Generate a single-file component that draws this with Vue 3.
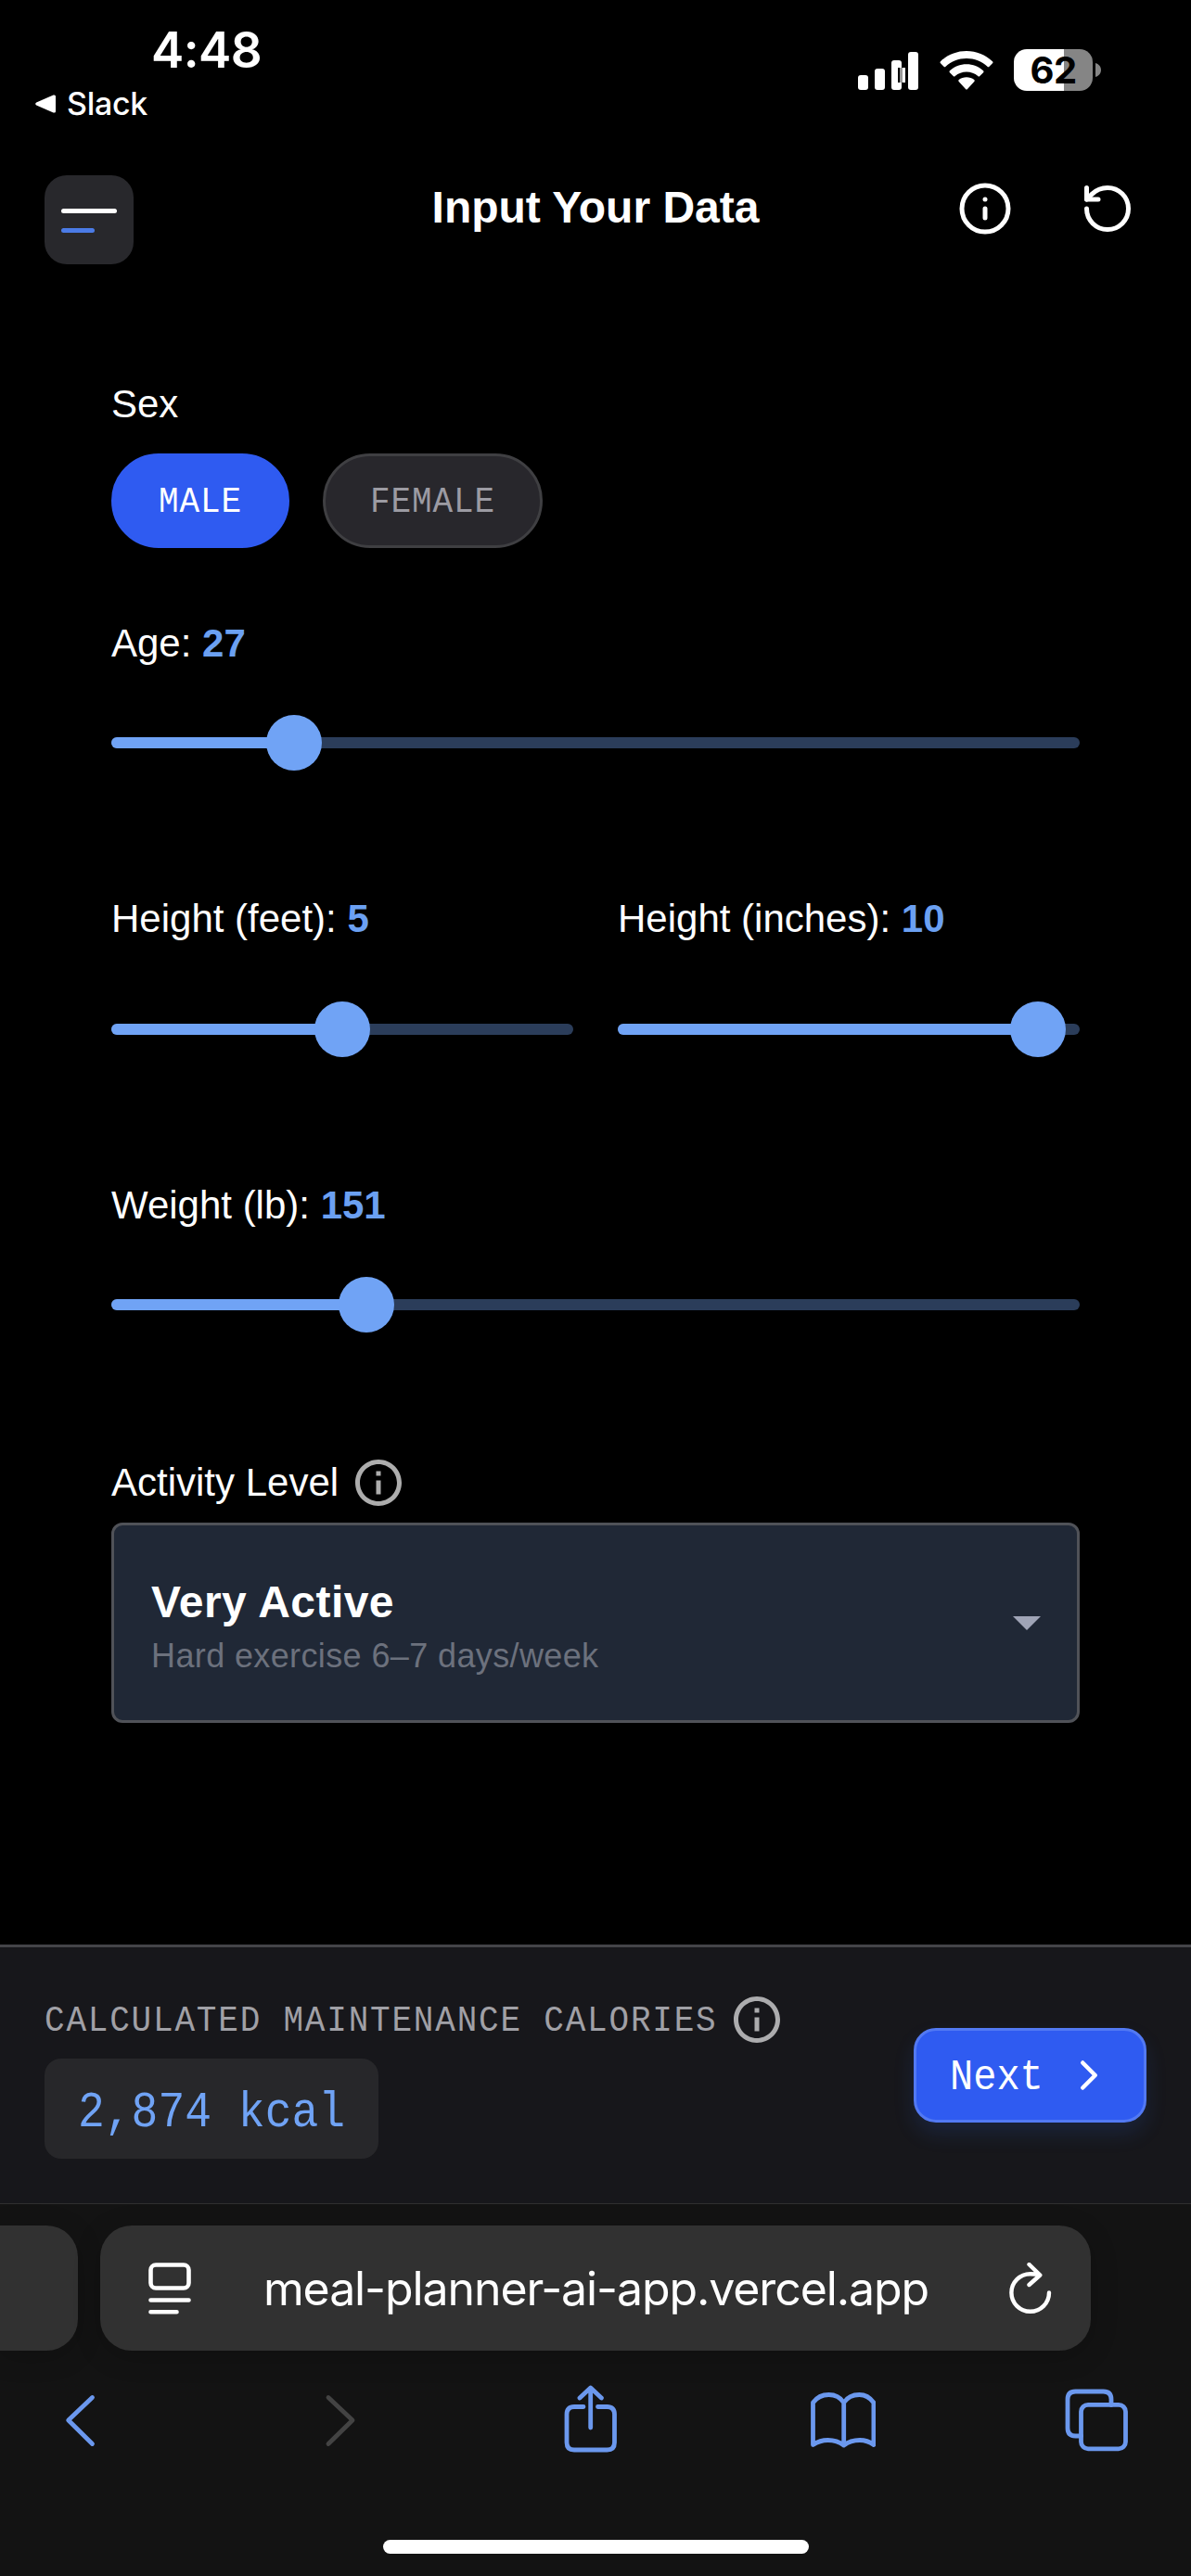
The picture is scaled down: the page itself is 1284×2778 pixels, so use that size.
<script setup>
import { ref, computed } from 'vue'

const sex = ref('Male')
const sexes = ['Male', 'Female']
const age = { label: 'Age', value: 27, percent: 18.9 }
const feet = { label: 'Height (feet)', value: 5, percent: 50 }
const inches = { label: 'Height (inches)', value: 10, percent: 90.9 }
const weight = { label: 'Weight (lb)', value: 151, percent: 26.3 }
const rows = [
  { name: 'age', fields: [age] },
  { name: 'height', fields: [feet, inches] },
  { name: 'weight', fields: [weight] },
]
const calories = ref(2874)
const caloriesText = computed(() => `${calories.value.toLocaleString('en-US')} kcal`)
</script>

<template>
  <div class="screen">
    <div class="status">
      <div class="status-left">
        <div class="time">4:48</div>
        <div class="back-app">
          <svg width="22" height="20" viewBox="0 0 22 20"><path d="M1.200 8.600 19.500.6Q22-.2 22 2v16q0 2.200-2.500 1.400L1.200 11.400Q-.8 10 1.200 8.600Z" fill="#fff" /></svg>
          <span>Slack</span>
        </div>
      </div>
      <div class="status-right">
        <svg class="signal" width="66" height="42" viewBox="0 0 66 42">
          <g fill="#fff">
            <rect x="0" y="26" width="11" height="16" rx="3" />
            <rect x="18" y="19" width="11" height="23" rx="3" />
            <rect x="36" y="10" width="11" height="32" rx="3" />
            <rect x="54" y="1" width="11" height="41" rx="3" />
          </g>
          <path d="M43 18h4v16h-4z" fill="#000" />
          <path d="M45 18h3v16h-3z" fill="#999" />
          <path d="M48 18h3v16h-3z" fill="#fff" />
        </svg>
        <svg class="wifi" width="58" height="42" viewBox="0 0 58 42" fill="#fff">
          <path d="M1 11.200C8.500 4 18.300 0 29 0s20.500 4 28 11.200q1 1 0 2L53.500 16.700q-1 1-2 0C45.500 11 37.500 8 29 8S12.500 11 6.500 16.700q-1 1-2 0L1 13.200q-1-1 0-2Z" />
          <path d="M10.900 21.200C15.800 16.700 22.200 14.200 29 14.200s13.200 2.500 18.100 7q1 1 0 2L43.300 27q-1 1-2 0C37.900 24 33.600 22.400 29 22.400S20.100 24 16.700 27q-1 1-2 0l-3.800-3.800q-1-1 0-2Z" />
          <path d="M20.700 31.100C23 29.300 25.900 28.300 29 28.300s6 1 8.300 2.800q1 1 0 2L30 41q-1 1-2 0l-7.300-7.900q-1-1 0-2Z" />
        </svg>
        <div class="battery"><span>62</span></div>
        <svg class="nub" width="6" height="15" viewBox="0 0 6 15"><path d="M0 0c3.500 1 6 4 6 7.500S3.500 14 0 15Z" fill="#858585" /></svg>
      </div>
    </div>

    <header class="header">
      <button class="menu" aria-label="Menu"><i class="bar"></i><i class="bar short"></i></button>
      <h1>Input Your Data</h1>
      <div class="actions">
        <svg width="60" height="60" viewBox="0 0 24 24" class="line"><circle cx="12" cy="12" r="10" /><path d="M12 16v-4M12 8h.01" /></svg>
        <svg width="60" height="60" viewBox="0 0 24 24" class="line"><path d="M3 12a9 9 0 1 0 9-9 9.750 9.750 0 0 0-6.740 2.740L3 8" /><path d="M3 3v5h5" /></svg>
      </div>
    </header>

    <main class="form">
      <div class="label">Sex</div>
      <div class="pills">
        <button v-for="s in sexes" :key="s" class="pill" :class="{ active: sex === s }" @click="sex = s"><span class="mono">{{ s }}</span></button>
      </div>

      <div v-for="row in rows" :key="row.name" class="row" :class="row.name">
        <div v-for="f in row.fields" :key="f.label" class="field">
          <div class="label">{{ f.label }}: <b>{{ f.value }}</b></div>
          <div class="slider">
            <div class="fill" :style="{ width: f.percent + '%' }"></div>
            <div class="thumb" :style="{ left: f.percent + '%' }"></div>
          </div>
        </div>
      </div>

      <div class="label activity">
        <span>Activity Level</span>
        <svg width="60" height="60" viewBox="0 0 24 24" fill="#adadad"><path d="M11 7h2v2h-2zm0 4h2v6h-2zm1-9C6.480 2 2 6.480 2 12s4.480 10 10 10 10-4.480 10-10S17.520 2 12 2m0 18c-4.410 0-8-3.590-8-8s3.590-8 8-8 8 3.590 8 8-3.590 8-8 8" /></svg>
      </div>
      <div class="select">
        <div class="option">
          <div class="option-title">Very Active</div>
          <div class="option-sub">Hard exercise 6–7 days/week</div>
        </div>
        <svg width="30" height="15" viewBox="0 0 30 15"><path d="M0 0h30L15 15Z" fill="#9fa4b6" /></svg>
      </div>
    </main>

    <footer class="summary">
      <div class="totals">
        <div class="caption">
          <span class="mono">Calculated Maintenance Calories</span>
          <svg width="60" height="60" viewBox="0 0 24 24" fill="#acacae"><path d="M11 7h2v2h-2zm0 4h2v6h-2zm1-9C6.480 2 2 6.480 2 12s4.480 10 10 10 10-4.480 10-10S17.520 2 12 2m0 18c-4.410 0-8-3.590-8-8s3.590-8 8-8 8 3.590 8 8-3.590 8-8 8" /></svg>
        </div>
        <div class="kcal"><span class="mono large">{{ caloriesText }}</span></div>
      </div>
      <button class="next">
        <span class="mono large">Next</span>
        <svg width="54" height="54" viewBox="0 0 24 24" class="line"><path d="m9 18 6-6-6-6" /></svg>
      </button>
    </footer>

    <div class="browser">
      <div class="tabs">
        <div class="tab previous"></div>
        <div class="tab current">
          <svg width="46" height="56" viewBox="0 0 46 56" fill="none" stroke="#fff" stroke-width="4.600" stroke-linecap="round">
            <rect x="2.500" y="2.500" width="41" height="25" rx="5.500" />
            <path d="M2.500 40.500h41M2.500 53.300h28" />
          </svg>
          <span class="address">meal-planner-ai-app.vercel.app</span>
          <svg width="48" height="56" viewBox="0 0 48 56" fill="none" stroke="#fff" stroke-width="4.400" stroke-linecap="round" stroke-linejoin="round">
            <path d="M44 32.500a20.300 20.300 0 1 1-20.300-20.300c3.500 0 6.500.2 9.800 1.200M22.500 2l11.800 11.500L22.500 24" />
          </svg>
        </div>
      </div>
      <div class="toolbar">
        <svg viewBox="0 0 72 74"><path d="M48.500 13.500 22.700 38l25.800 25.500" /></svg>
        <svg viewBox="0 0 72 74" class="disabled"><path d="M30 13.500 56 38l-26 25.500" /></svg>
        <svg viewBox="0 0 72 74">
          <path d="M31 23.500h-10q-8 0-8 8v30.500q0 8 8 8h35.500q8 0 8-8v-30.500q0-8-8-8h-10M38.700 46V3.500M27 14 38.700 3 50.400 14" />
        </svg>
        <svg viewBox="0 0 72 74">
          <path d="M37.700 19C33.500 12.700 28 10.500 21.500 10.500S8.500 13.500 4.500 19v45.500C9 61.500 14 59.500 20.500 59.500s12.700 2 17.200 5.500c4.500-3.500 10.700-5.500 17.200-5.500s11 2 15 5V19c-4-5.500-9-8.500-15.500-8.500S41.900 12.700 37.700 19ZM37.700 19v46" />
        </svg>
        <svg viewBox="0 0 72 74">
          <rect x="19.500" y="21.300" width="48" height="47.500" rx="7.500" />
          <path d="M19.500 55h-6q-8.500 0-8.500-8.500V15.500Q5 7 13.500 7h30Q52 7 52 15.500v6" />
        </svg>
      </div>
      <div class="home"></div>
    </div>
  </div>
</template>

<style>
body {
  background: #000;
}
</style>

<style scoped>
.screen {
  box-sizing: border-box;
  display: flex;
  flex-direction: column;
  width: 1284px;
  height: 2778px;
  overflow: hidden;
  background: #000;
  color: #fff;
  font-family: 'Liberation Sans', Arial, sans-serif;
}
button {
  margin: 0;
  color: inherit;
  box-sizing: border-box;
}
svg {
  flex: none;
  display: block;
}
.line {
  fill: none;
  stroke: #fff;
  stroke-width: 2;
  stroke-linecap: round;
  stroke-linejoin: round;
}
/* slightly condensed, taller monospace */
.mono {
  display: inline-block;
  line-height: 1.133;
  transform: translateY(0.075em) scaleY(1.1);
  transform-origin: 0 73.5%;
}
.mono.large {
  transform: translateY(0.115em) scaleY(1.1);
}

.status {
  height: 189px;
  box-sizing: border-box;
  display: flex;
  justify-content: space-between;
  padding: 22px 97px 0 38px;
  font-family: Inter, sans-serif;
}
.time {
  padding-left: 125px;
  height: 64px;
  line-height: 64px;
  font-size: 53px;
  font-weight: 600;
  letter-spacing: -0.6px;
}
.back-app {
  display: flex;
  align-items: center;
  gap: 12px;
  margin-top: 5px;
  height: 41px;
  line-height: 41px;
  font-size: 34px;
  font-weight: 500;
  letter-spacing: -0.3px;
}
.status-right {
  display: flex;
  align-items: center;
  height: 45px;
  margin-top: 31px;
}
.wifi {
  margin-left: 22px;
}
.battery {
  width: 85px;
  height: 45px;
  margin-left: 22px;
  border-radius: 14px;
  background: linear-gradient(90deg, #fff 54px, #858585 54px);
  color: #000;
  font-size: 40px;
  font-weight: 650;
  line-height: 45px;
  text-align: center;
  letter-spacing: -0.5px;
}
.nub {
  margin-left: 3px;
}

.header {
  display: grid;
  grid-template-columns: 300px 1fr 300px;
  height: 96px;
  padding: 0 48px;
}
.menu {
  display: flex;
  flex-direction: column;
  align-items: flex-start;
  gap: 16px;
  width: 96px;
  height: 96px;
  padding: 36px 0 0 18px;
  border: 0;
  border-radius: 24px;
  background: #28282c;
}
.bar {
  width: 60px;
  height: 5px;
  border-radius: 3px;
  background: #fff;
}
.bar.short {
  width: 36px;
  background: #4b7be6;
}
h1 {
  margin: -1px 0 0;
  font-size: 48px;
  line-height: 72px;
  font-weight: 700;
  text-align: center;
}
.actions {
  display: flex;
  justify-content: flex-end;
  gap: 72px;
  padding: 6px 12px 0 0;
}

.form {
  flex: 1;
  padding: 119px 120px 0;
}
.label {
  height: 63px;
  line-height: 63px;
  font-size: 42px;
  white-space: pre;
}
.label b {
  color: #6ba0f2;
}
.pills {
  display: flex;
  gap: 36px;
  margin-top: 22px;
}
.pill {
  height: 102px;
  padding: 0 48px;
  border: 3px solid #3f3f42;
  border-radius: 51px;
  background: #28272c;
  color: #9c9ba3;
  font-family: 'Liberation Mono', monospace;
  font-size: 36px;
  letter-spacing: 0.9px;
  text-transform: uppercase;
}
.pill.active {
  background: #2f5bf1;
  border-color: #2f5bf1;
  color: #fff;
}
.row {
  display: flex;
  gap: 48px;
}
.field {
  flex: 1;
}
.age {
  margin-top: 71px;
}
.height {
  margin-top: 152px;
}
.weight {
  margin-top: 152px;
}
.slider {
  position: relative;
  height: 12px;
  margin-top: 70px;
  border-radius: 6px;
  background: #2b3d5a;
}
.height .slider {
  margin-top: 82px;
}
.fill {
  height: 12px;
  border-radius: 6px;
  background: #70a3f5;
}
.thumb {
  position: absolute;
  top: -24px;
  width: 60px;
  height: 60px;
  margin-left: -30px;
  border-radius: 50%;
  background: #70a3f5;
}
.activity {
  display: flex;
  align-items: center;
  gap: 13px;
  margin-top: 154px;
}
.select {
  box-sizing: border-box;
  display: flex;
  align-items: center;
  justify-content: space-between;
  height: 216px;
  margin-top: 12px;
  padding: 0 39px 0 40px;
  border: 3px solid #505258;
  border-radius: 12px;
  background: #202836;
}
.option {
  padding-top: 7px;
}
.option-title {
  height: 65px;
  line-height: 67px;
  font-size: 48px;
  font-weight: 700;
  letter-spacing: 0.45px;
}
.option-sub {
  height: 54px;
  line-height: 54px;
  color: #6c717d;
  font-size: 36px;
  letter-spacing: 0.38px;
}

.summary {
  box-sizing: border-box;
  display: flex;
  align-items: center;
  justify-content: space-between;
  height: 279px;
  padding: 0 48px;
  border-top: 3px solid #444448;
  background: #17171b;
  font-family: 'Liberation Mono', monospace;
}
.caption {
  display: flex;
  align-items: center;
  gap: 12px;
  height: 60px;
  color: #a0a0a6;
  font-size: 36px;
  letter-spacing: 1.8px;
  text-transform: uppercase;
}
.kcal {
  display: flex;
  align-items: center;
  width: max-content;
  height: 108px;
  margin-top: 12px;
  padding: 0 36px;
  border-radius: 18px;
  background: #27272a;
  color: #70a3f5;
  font-size: 48px;
}
.next {
  display: flex;
  align-items: center;
  justify-content: space-between;
  width: 251px;
  height: 102px;
  padding: 0 32px 0 36px;
  border: 3px solid #5279f3;
  border-radius: 24px;
  background: #2f5bf1;
  box-shadow: 0 12px 22px rgba(43, 100, 220, 0.16);
  font-family: inherit;
  font-size: 42px;
}

.browser {
  box-sizing: border-box;
  height: 402px;
  border-top: 1px solid #303030;
  background: #131313;
}
.tabs {
  display: flex;
  gap: 24px;
  padding-top: 23px;
}
.tab {
  box-sizing: border-box;
  height: 135px;
  border-radius: 34px;
  background: #313131;
  box-shadow: 0 6px 30px rgba(0, 0, 0, 0.18);
}
.tab.previous {
  width: 84px;
  border-radius: 0 34px 34px 0;
}
.tab.current {
  display: flex;
  align-items: center;
  justify-content: space-between;
  width: 1068px;
  padding: 0 41px 0 52px;
  font-family: Inter, sans-serif;
}
.address {
  margin-right: 8px;
  font-size: 50px;
  letter-spacing: -1.1px;
  white-space: nowrap;
}
.toolbar {
  display: flex;
  justify-content: space-between;
  padding: 37px 66.5px 0 50.5px;
}
.toolbar svg {
  width: 72px;
  height: 74px;
  fill: none;
  stroke: #6b98ee;
  stroke-width: 4.8;
  stroke-linecap: round;
  stroke-linejoin: round;
}
.toolbar .disabled {
  stroke: #434343;
}
.home {
  width: 459px;
  height: 15px;
  margin: 93px auto 0;
  border-radius: 8px;
  background: #fff;
}
</style>
